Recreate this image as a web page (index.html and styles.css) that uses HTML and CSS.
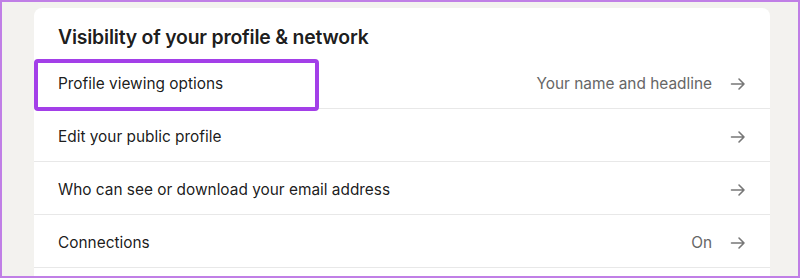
FILE: index.html
```html
<!DOCTYPE html>
<html lang="en">
<head>
<meta charset="utf-8">
<title>Visibility of your profile &amp; network</title>
<link rel="stylesheet" href="styles.css">
</head>
<body>
<div class="frame">
  <section class="card">
    <h2 class="card-title">Visibility of your profile &amp; network</h2>
    <ul class="list">
      <li class="row row-highlighted">
        <span class="row-label">Profile viewing options</span>
        <span class="row-meta">
          <span class="row-value">Your name and headline</span>
          <svg class="arrow" width="16" height="16" viewBox="0 0 16 16"><path d="M1.5 8H14M9 3l5 5-5 5" /></svg>
        </span>
        <span class="highlight"></span>
      </li>
      <li class="row">
        <span class="row-label">Edit your public profile</span>
        <span class="row-meta">
          <svg class="arrow" width="16" height="16" viewBox="0 0 16 16"><path d="M1.5 8H14M9 3l5 5-5 5" /></svg>
        </span>
      </li>
      <li class="row">
        <span class="row-label">Who can see or download your email address</span>
        <span class="row-meta">
          <svg class="arrow" width="16" height="16" viewBox="0 0 16 16"><path d="M1.5 8H14M9 3l5 5-5 5" /></svg>
        </span>
      </li>
      <li class="row">
        <span class="row-label">Connections</span>
        <span class="row-meta">
          <span class="row-value">On</span>
          <svg class="arrow" width="16" height="16" viewBox="0 0 16 16"><path d="M1.5 8H14M9 3l5 5-5 5" /></svg>
        </span>
      </li>
    </ul>
  </section>
</div>
</body>
</html>
```

FILE: styles.css
```css
* { box-sizing: border-box; }
html, body { margin: 0; padding: 0; }
body {
  width: 800px;
  height: 278px;
  overflow: hidden;
  font-family: Inter, "Noto Sans", "Liberation Sans", sans-serif;
  color: rgba(0, 0, 0, 0.9);
}
.frame {
  width: 800px;
  height: 278px;
  border: 2px solid #c07fe6;
  background: #f3f2ef;
  padding: 6px 28px 0 32px;
  overflow: hidden;
}
.card {
  width: 736px;
  background: #ffffff;
  border-radius: 8px;
  min-height: 300px;
}
.card-title {
  margin: 0;
  padding: 15px 24px 0 24px;
  height: 48px;
  font-size: 19.4px;
  line-height: 28px;
  font-weight: 600;
  letter-spacing: -0.2px;
}
.list {
  list-style: none;
  margin: 0;
  padding: 0;
}
.row {
  position: relative;
  display: flex;
  align-items: center;
  justify-content: space-between;
  height: 53px;
  padding: 3px 24px 0 24px;
  border-bottom: 1px solid #e8e8e8;
  font-size: 15.4px;
}
.row-label {
  color: rgba(0, 0, 0, 0.9);
}
.row-meta {
  display: flex;
  align-items: center;
  gap: 18px;
}
.row-value {
  color: #666666;
}
.arrow {
  fill: none;
  stroke: #777777;
  stroke-width: 1.6;
  stroke-linecap: round;
  stroke-linejoin: round;
}
.highlight {
  position: absolute;
  left: 0;
  top: 3px;
  width: 285px;
  height: 52px;
  border: 4px solid #a33fe8;
  border-radius: 4px;
}
```
